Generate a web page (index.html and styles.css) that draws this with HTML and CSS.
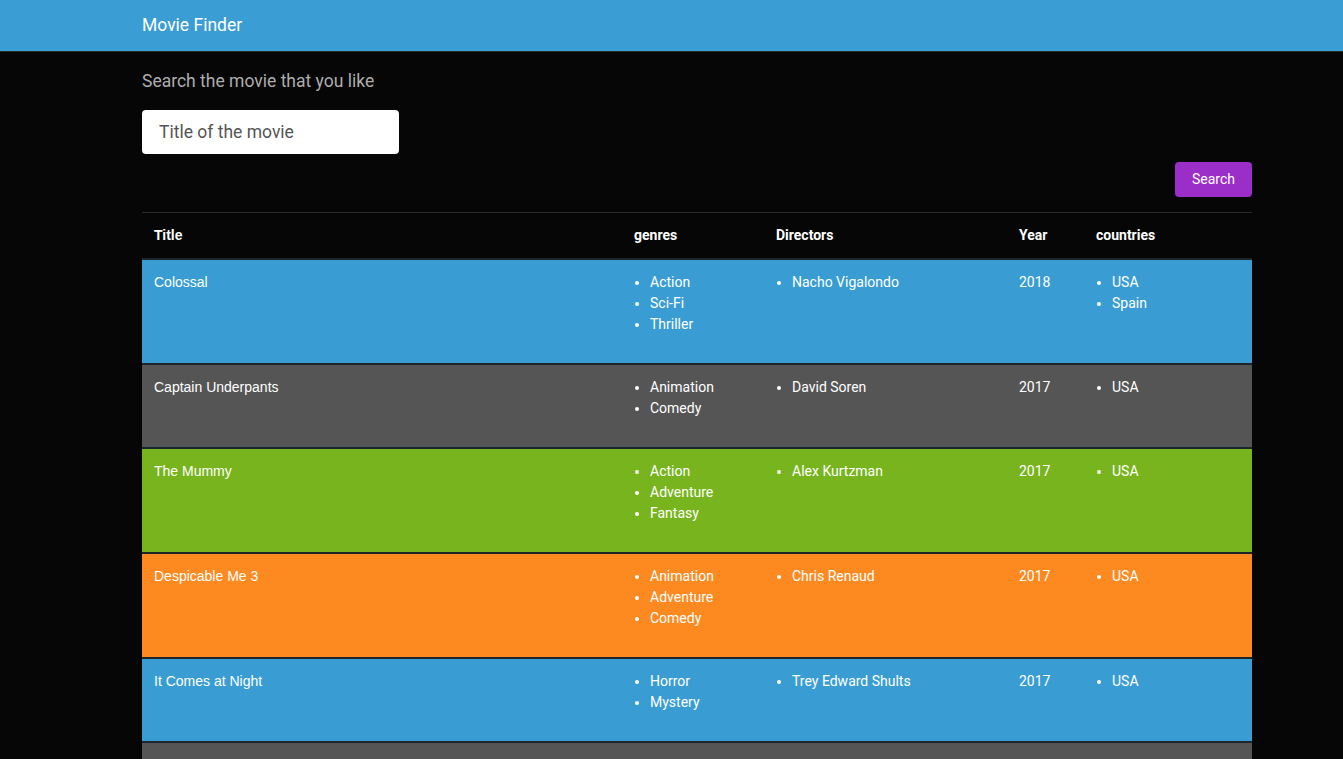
FILE: index.html
```html
<!DOCTYPE html>
<html lang="en">
<head>
<meta charset="utf-8">
<title>Movie Finder</title>
<link rel="stylesheet" href="styles.css">
</head>
<body>
<nav class="navbar">
  <div class="wrap"><span class="brand">Movie Finder</span></div>
</nav>
<main class="wrap main">
  <p class="lead">Search the movie that you like</p>
  <input class="search-input" type="text" placeholder="Title of the movie">
  <div class="actions"><button class="btn">Search</button></div>
  <table class="movies">
    <colgroup>
      <col class="c-title"><col class="c-genres"><col class="c-dir"><col class="c-year"><col class="c-country">
    </colgroup>
    <thead>
      <tr><th class="title">Title</th><th>genres</th><th>Directors</th><th>Year</th><th>countries</th></tr>
    </thead>
    <tbody>
      <tr class="r-blue">
        <td class="title">Colossal</td>
        <td><ul><li>Action</li><li>Sci-Fi</li><li>Thriller</li></ul></td>
        <td><ul><li>Nacho Vigalondo</li></ul></td>
        <td>2018</td>
        <td><ul><li>USA</li><li>Spain</li></ul></td>
      </tr>
      <tr class="r-gray">
        <td class="title">Captain Underpants</td>
        <td><ul><li>Animation</li><li>Comedy</li></ul></td>
        <td><ul><li>David Soren</li></ul></td>
        <td>2017</td>
        <td><ul><li>USA</li></ul></td>
      </tr>
      <tr class="r-green">
        <td class="title">The Mummy</td>
        <td><ul><li>Action</li><li>Adventure</li><li>Fantasy</li></ul></td>
        <td><ul><li>Alex Kurtzman</li></ul></td>
        <td>2017</td>
        <td><ul><li>USA</li></ul></td>
      </tr>
      <tr class="r-orange">
        <td class="title">Despicable Me 3</td>
        <td><ul><li>Animation</li><li>Adventure</li><li>Comedy</li></ul></td>
        <td><ul><li>Chris Renaud</li></ul></td>
        <td>2017</td>
        <td><ul><li>USA</li></ul></td>
      </tr>
      <tr class="r-blue">
        <td class="title">It Comes at Night</td>
        <td><ul><li>Horror</li><li>Mystery</li></ul></td>
        <td><ul><li>Trey Edward Shults</li></ul></td>
        <td>2017</td>
        <td><ul><li>USA</li></ul></td>
      </tr>
      <tr class="r-gray">
        <td class="title">Wonder Woman</td>
        <td><ul><li>Action</li><li>Adventure</li><li>Fantasy</li></ul></td>
        <td><ul><li>Patty Jenkins</li></ul></td>
        <td>2017</td>
        <td><ul><li>USA</li></ul></td>
      </tr>
    </tbody>
  </table>
</main>
</body>
</html>
```
FILE: styles.css
```css
html, body {
  margin: 0;
  padding: 0;
  background: #060606;
  color: #fff;
  font-family: Roboto, "Noto Sans", sans-serif;
  font-size: 14px;
  line-height: 1.5;
  overflow-x: hidden;
}

.wrap {
  width: 1110px;
  margin-left: 142px;
}

.navbar {
  height: 51px;
  background: #3a9dd4;
  border-bottom: 1px solid #2a2a2a;
  display: flex;
  align-items: center;
}

.brand {
  display: block;
  font-size: 17.5px;
  line-height: 1;
  color: #fff;
  padding-top: 1px;
}

.main {
  padding-top: 16px;
}

.lead {
  margin: 0;
  font-size: 17.5px;
  line-height: 26px;
  color: #adadad;
}

.search-input {
  display: block;
  box-sizing: border-box;
  margin-top: 16px;
  width: 257px;
  height: 44px;
  border: none;
  border-radius: 4px;
  background: #fff;
  padding: 0 17px;
  font-family: Roboto, "Noto Sans", sans-serif;
  font-size: 17.5px;
  color: #444;
  outline: none;
}

.search-input::placeholder {
  color: #555;
  opacity: 1;
}

.actions {
  display: flex;
  justify-content: flex-end;
  margin-top: 8px;
}

.btn {
  width: 77px;
  height: 35px;
  border: none;
  border-radius: 4px;
  background: #9b2dc9;
  color: #fff;
  font-family: Roboto, "Noto Sans", sans-serif;
  font-size: 14px;
  line-height: 1;
  padding: 0 0 2px 0;
  cursor: pointer;
}

.movies {
  margin-top: 15px;
  width: 1110px;
  table-layout: fixed;
  border-collapse: collapse;
}

.c-title { width: 480px; }
.c-genres { width: 142px; }
.c-dir { width: 243px; }
.c-year { width: 77px; }
.c-country { width: 168px; }

.movies th {
  text-align: left;
  font-weight: 700;
  padding: 12px;
  border-top: 1px solid #2a2a2a;
  vertical-align: top;
}

.movies td {
  padding: 12px;
  vertical-align: top;
  border-top: 2px solid #1e252b;
  color: #fff;
}

.movies .title {
  font-family: "Liberation Sans", Arial, sans-serif;
}

.movies ul {
  margin: 0 0 16px 0;
  padding-left: 16px;
}

.r-blue { background: #399dd4; }
.r-gray { background: #555555; }
.r-green { background: #77b41e; }
.r-orange { background: #fd8a21; }
```
